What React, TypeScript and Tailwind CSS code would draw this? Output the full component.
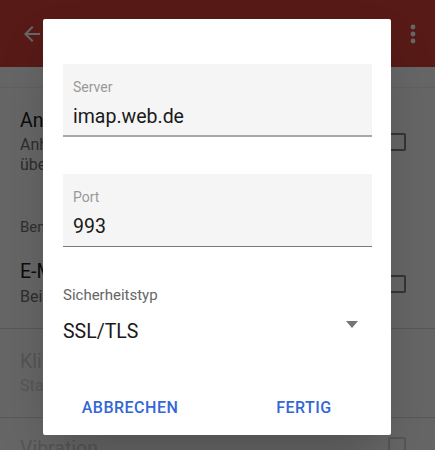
const font = { fontFamily: "Roboto, 'Noto Sans', Arial, sans-serif" };

function Checkbox({ disabled = false }: { disabled?: boolean }) {
  return (
    <div
      className={
        "w-[18px] h-[18px] rounded-[2px] border-2 shrink-0 " +
        (disabled ? "border-[#d6d6d6]" : "border-[#858585]")
      }
    />
  );
}

function Field({
  label,
  value,
  focused = false,
}: {
  label: string;
  value: string;
  focused?: boolean;
}) {
  return (
    <div
      className={
        "h-[73px] bg-[#f5f5f5] pl-[10px] pt-[14px] " +
        (focused ? "border-b-2 border-[#a8a8a8]" : "border-b border-[#7a7a7a]")
      }
    >
      <div className="text-[14px] leading-[18px] text-[#999999]">{label}</div>
      <div className="mt-[8px] text-[19.5px] leading-[26px] text-[#1a1a1a]">{value}</div>
    </div>
  );
}

export default function App() {
  return (
    <div className="relative w-[435px] h-[450px] overflow-hidden bg-white" style={font}>
      {/* settings screen behind the dialog */}
      <div className="h-[67px] bg-[#d9433a] flex items-center justify-between pl-[20px] pr-[15px]">
        <svg width="24" height="24" viewBox="0 0 24 24" fill="#ffffff">
          <path d="M20 11H7.83l5.59-5.59L12 4l-8 8 8 8 1.41-1.41L7.83 13H20v-2z" />
        </svg>
        <svg width="14" height="24" viewBox="0 0 14 24" fill="#ffffff">
          <circle cx="7" cy="5" r="2.4" />
          <circle cx="7" cy="12" r="2.4" />
          <circle cx="7" cy="19" r="2.4" />
        </svg>
      </div>
      <div className="h-[21px] border-b border-[#f0f0f0]" />

      <div className="flex items-center justify-between pl-[20px] pr-[29px] pt-[21px]">
        <div>
          <div className="text-[19.5px] leading-[24px] text-[#1e1e1e]">Anhänge</div>
          <div className="mt-[2px] text-[16px] leading-[20px] text-[#727272]">
            Anhänge automatisch
            <br />
            übertragen
          </div>
        </div>
        <Checkbox />
      </div>

      <div className="pl-[20px] mt-[42px] text-[15px] leading-[20px] text-[#777777]">
        Benachrichtigungen
      </div>

      <div className="flex items-center justify-between pl-[20px] pr-[29px] pt-[23px] pb-[21px] border-b border-[#dcdcdc]">
        <div>
          <div className="text-[19.5px] leading-[24px] text-[#1e1e1e]">E-Mail</div>
          <div className="mt-[3px] text-[16px] leading-[20px] text-[#727272]">
            Bei neuen E-Mails benachrichtigen
          </div>
        </div>
        <Checkbox />
      </div>

      <div className="pl-[20px] pt-[21px] pb-[21px] border-b border-[#dcdcdc]">
        <div className="text-[19.5px] leading-[24px] text-[#d4d4d4]">Klingelton</div>
        <div className="mt-[2px] text-[16px] leading-[20px] text-[#dadada]">Standard</div>
      </div>

      <div className="flex items-start justify-between pl-[20px] pr-[29px] pt-[19px]">
        <div className="text-[19.5px] leading-[24px] text-[#d4d4d4]">Vibration</div>
        <Checkbox disabled />
      </div>

      {/* dim overlay */}
      <div className="absolute inset-0 bg-black/60" />

      {/* dialog */}
      <div className="absolute left-[43px] top-[19px] w-[348px] h-[416px] bg-white rounded-[2px] shadow-2xl flex flex-col">
        <div className="pt-[45px] pl-[20px] pr-[19px]">
          <Field label="Server" value="imap.web.de" focused />
          <div className="mt-[37px]">
            <Field label="Port" value="993" />
          </div>
          <div className="mt-[39px] text-[15px] leading-[18px] text-[#666666]">Sicherheitstyp</div>
          <div className="mt-[15px] flex items-start justify-between pr-[14px]">
            <div className="text-[19.5px] leading-[26px] text-[#1a1a1a]">SSL/TLS</div>
            <svg width="12" height="7" viewBox="0 0 12 7" className="mt-[2px]">
              <path d="M0 0h12L6 7z" fill="#757575" />
            </svg>
          </div>
        </div>
        <div className="mt-[53px] grid grid-cols-2">
          <button className="text-center text-[16px] leading-[20px] font-medium tracking-[0.5px] text-[#3367d6]">
            ABBRECHEN
          </button>
          <button className="text-center text-[16px] leading-[20px] font-medium tracking-[0.5px] text-[#3367d6]">
            FERTIG
          </button>
        </div>
      </div>
    </div>
  );
}
